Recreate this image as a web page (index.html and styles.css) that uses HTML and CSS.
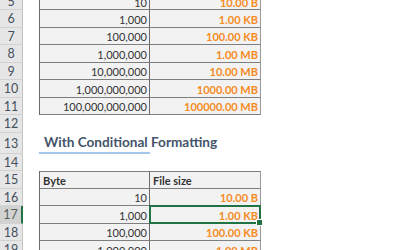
FILE: index.html
```html
<!DOCTYPE html>
<html>
<head>
<meta charset="utf-8">
<link rel="stylesheet" href="styles.css">
</head>
<body>
<div class="sheet">
  <div class="rh">5</div><div class="gap"></div><div class="c1 t">10</div><div class="c2 t o">10.00 B</div><div class="rest"></div>
  <div class="rh">6</div><div class="gap"></div><div class="c1">1,000</div><div class="c2 o">1.00 KB</div><div class="rest"></div>
  <div class="rh">7</div><div class="gap"></div><div class="c1">100,000</div><div class="c2 o">100.00 KB</div><div class="rest"></div>
  <div class="rh">8</div><div class="gap"></div><div class="c1">1,000,000</div><div class="c2 o">1.00 MB</div><div class="rest"></div>
  <div class="rh">9</div><div class="gap"></div><div class="c1">10,000,000</div><div class="c2 o">10.00 MB</div><div class="rest"></div>
  <div class="rh">10</div><div class="gap"></div><div class="c1">1,000,000,000</div><div class="c2 o">1000.00 MB</div><div class="rest"></div>
  <div class="rh">11</div><div class="gap"></div><div class="c1">100,000,000,000</div><div class="c2 o">100000.00 MB</div><div class="rest"></div>
  <div class="rh">12</div><div class="gap"></div><div class="blank"></div><div class="blank"></div><div class="rest"></div>
  <div class="rh">13</div><div class="gap"></div><div class="title"><span>With Conditional Formatting</span></div><div class="blank"></div><div class="rest"></div>
  <div class="rh">14</div><div class="gap"></div><div class="blank"></div><div class="blank"></div><div class="rest"></div>
  <div class="rh">15</div><div class="gap"></div><div class="c1 t hd">Byte</div><div class="c2 t hd">File size</div><div class="rest"></div>
  <div class="rh">16</div><div class="gap"></div><div class="c1">10</div><div class="c2 o">10.00 B</div><div class="rest"></div>
  <div class="rh selrow">17</div><div class="gap"></div><div class="c1">1,000</div><div class="c2 o sel">1.00 KB</div><div class="rest"></div>
  <div class="rh">18</div><div class="gap"></div><div class="c1">100,000</div><div class="c2 o">100.00 KB</div><div class="rest"></div>
  <div class="rh">19</div><div class="gap"></div><div class="c1">1,000,000</div><div class="c2 o">1.00 MB</div><div class="rest"></div>
</div>
</body>
</html>
```
FILE: styles.css
```css
* { box-sizing: border-box; }
html, body { margin: 0; padding: 0; background: #fff; overflow: hidden; }
body { width: 400px; height: 250px; font-family: Lato, "Open Sans", sans-serif; }

.sheet {
  display: grid;
  grid-template-columns: 23px 16px 111px 111px 1fr;
  grid-template-rows: repeat(8, 17.5px) 21px repeat(6, 17.5px);
  margin-top: -7.5px;
  font-size: 11px;
}

.rh {
  background: #e6e6e6;
  border-right: 1px solid #c4c4c4;
  border-bottom: 1px solid #d2d2d2;
  color: #44505e;
  font-size: 12.5px;
  display: flex;
  align-items: center;
  justify-content: center;
  padding-top: 1px;
}
.rh.selrow {
  background: #d2d2d2;
  border-right: 2px solid #217346;
  color: #56615a;
}

.c1, .c2 {
  background: #f2f2f2;
  border-bottom: 1px solid #7f7f7f;
  border-right: 1px solid #6b6b6b;
  color: #333;
  display: flex;
  align-items: center;
  justify-content: flex-end;
  padding: 2px 2px 0 3px;
  white-space: nowrap;
}
.c1 { border-left: 1px solid #6b6b6b; }
.c2 { border-right-color: #9a9a9a; }
.t { border-top: 1px solid #7f7f7f; }
.o { color: #f68b1f; font-weight: 700; }
.hd { justify-content: flex-start; font-weight: 700; color: #333; }

.title {
  border-bottom: 2px solid #a4c6e8;
  display: flex;
  align-items: center;
  padding: 0 0 0 5px;
  overflow: visible;
  white-space: nowrap;
}
.title span {
  font-size: 13.6px;
  font-weight: 700;
  color: #44546a;
}

.sel { position: relative; }
.sel::after {
  content: "";
  position: absolute;
  top: -1px; left: -1px; right: -1px; bottom: -1px;
  border: 2px solid #217346;
}
.sel::before {
  content: "";
  position: absolute;
  right: -3px; bottom: -3px;
  width: 5px; height: 5px;
  background: #217346;
  border: 1px solid #fff;
  z-index: 1;
}
```
